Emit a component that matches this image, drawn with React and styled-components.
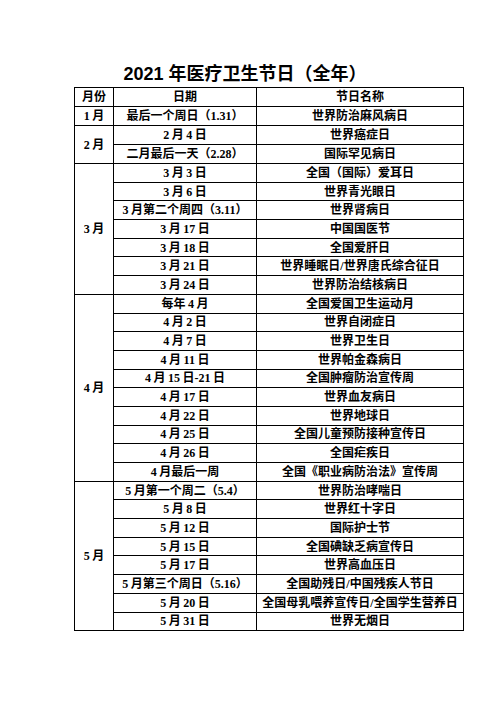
import React from 'react';
import styled, { createGlobalStyle } from 'styled-components';

const Global = createGlobalStyle`
  html, body { margin: 0; padding: 0; background: #fff; }
  body { font-family: "Noto Sans CJK SC", sans-serif; color: #000; }
`;

const Page = styled.div`
  width: 496px;
  height: 702px;
  padding: 61px 0 0 74px;
  box-sizing: border-box;
`;

const Title = styled.h1`
  margin: 0;
  width: 388px;
  padding-right: 46px;
  box-sizing: border-box;
  text-align: center;
  font-family: "Liberation Sans", "Noto Sans CJK SC", sans-serif;
  font-weight: 700;
  font-size: 18px;
  line-height: 26px;
  letter-spacing: 0;
`;

const Table = styled.table`
  border-collapse: collapse;
  table-layout: fixed;
  width: 389px;
  font-family: "Liberation Serif", "Noto Sans CJK SC", serif;
  font-weight: 700;
  font-size: 12px;
`;

const Cell = styled.td`
  border: 1px solid #000;
  padding: 0;
  height: ${(p) => (p.$tall ? 18 : 17.7)}px;
  line-height: 14px;
  text-align: center;
  vertical-align: middle;
  white-space: nowrap;
  overflow: hidden;
`;

const Num = styled.span`
  margin-left: ${(p) => (p.$l ? '2.5px' : '0')};
  margin-right: ${(p) => (p.$r ? '2.5px' : '0')};
`;

const isCjkWord = (c) => !!c && /[\u4e00-\u9fff]/.test(c);

function Auto({ text }) {
  const parts = text.split(/([0-9.]+)/);
  let pos = 0;
  return parts.map((part, i) => {
    const start = pos;
    pos += part.length;
    if (/^[0-9.]+$/.test(part)) {
      const prev = text[start - 1];
      const next = text[start + part.length];
      return (
        <Num key={i} $l={isCjkWord(prev)} $r={isCjkWord(next)}>
          {part}
        </Num>
      );
    }
    return <React.Fragment key={i}>{part}</React.Fragment>;
  });
}

const data = [
  { month: '1月', rows: [['最后一个周日（1.31）', '世界防治麻风病日']] },
  { month: '2月', rows: [['2月4日', '世界癌症日'], ['二月最后一天（2.28）', '国际罕见病日']] },
  {
    month: '3月',
    rows: [
      ['3月3日', '全国（国际）爱耳日'],
      ['3月6日', '世界青光眼日'],
      ['3月第二个周四（3.11）', '世界肾病日'],
      ['3月17日', '中国国医节'],
      ['3月18日', '全国爱肝日'],
      ['3月21日', '世界睡眠日/世界唐氏综合征日'],
      ['3月24日', '世界防治结核病日'],
    ],
  },
  {
    month: '4月',
    rows: [
      ['每年4月', '全国爱国卫生运动月'],
      ['4月2日', '世界自闭症日'],
      ['4月7日', '世界卫生日'],
      ['4月11日', '世界帕金森病日'],
      ['4月15日-21日', '全国肿瘤防治宣传周'],
      ['4月17日', '世界血友病日'],
      ['4月22日', '世界地球日'],
      ['4月25日', '全国儿童预防接种宣传日'],
      ['4月26日', '全国疟疾日'],
      ['4月最后一周', '全国《职业病防治法》宣传周'],
    ],
  },
  {
    month: '5月',
    rows: [
      ['5月第一个周二（5.4）', '世界防治哮喘日'],
      ['5月8日', '世界红十字日'],
      ['5月12日', '国际护士节'],
      ['5月15日', '全国碘缺乏病宣传日'],
      ['5月17日', '世界高血压日'],
      ['5月第三个周日（5.16）', '全国助残日/中国残疾人节日'],
      ['5月20日', '全国母乳喂养宣传日/全国学生营养日'],
      ['5月31日', '世界无烟日'],
    ],
  },
];

export default function App() {
  return (
    <>
      <Global />
      <Page>
        <Title>2021 年医疗卫生节日（全年）</Title>
        <Table>
          <colgroup>
            <col style={{ width: 39 }} />
            <col style={{ width: 143 }} />
            <col style={{ width: 207 }} />
          </colgroup>
          <tbody>
            <tr>
              <Cell as="th" $tall>月份</Cell>
              <Cell as="th" $tall>日期</Cell>
              <Cell as="th" $tall>节日名称</Cell>
            </tr>
            {data.map((g) =>
              g.rows.map((r, i) => (
                <tr key={g.month + i}>
                  {i === 0 && (
                    <Cell rowSpan={g.rows.length} $tall={g.rows.length < 3}>
                      <Auto text={g.month} />
                    </Cell>
                  )}
                  <Cell $tall={g.rows.length < 3}>
                    <Auto text={r[0]} />
                  </Cell>
                  <Cell $tall={g.rows.length < 3}>
                    <Auto text={r[1]} />
                  </Cell>
                </tr>
              ))
            )}
          </tbody>
        </Table>
      </Page>
    </>
  );
}
